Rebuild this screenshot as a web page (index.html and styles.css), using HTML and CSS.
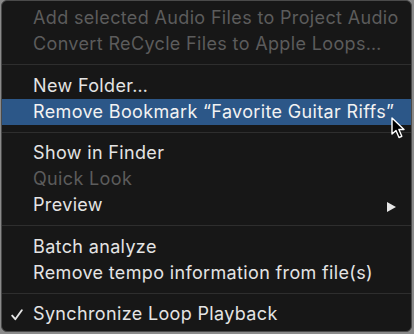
FILE: index.html
```html
<!DOCTYPE html>
<html>
<head>
  <title>Context Menu</title>
  <link rel="stylesheet" href="styles.css">
</head>
<body>
  <div class="menu">
    <div class="menu-item disabled">Add selected Audio Files to Project Audio</div>
    <div class="menu-item disabled">Convert ReCycle Files to Apple Loops…</div>
    <div class="separator wide"></div>
    <div class="menu-item">New Folder…</div>
    <div class="menu-item selected">Remove Bookmark “Favorite Guitar Riffs”
      <svg class="cursor" width="16" height="24" viewBox="0 0 16 24">
        <path d="M1 1 L1 17 L5 13.5 L8 20.5 L10.8 19.3 L7.9 12.5 L13 12.5 Z" fill="#000" stroke="#fff" stroke-width="1.4" stroke-linejoin="round"/>
      </svg>
    </div>
    <div class="separator"></div>
    <div class="menu-item">Show in Finder</div>
    <div class="menu-item disabled">Quick Look</div>
    <div class="menu-item has-submenu">Preview
      <svg class="submenu-arrow" width="9" height="10" viewBox="0 0 9 10">
        <path d="M0 0 L9 5 L0 10 Z" fill="#e6e6e6"/>
      </svg>
    </div>
    <div class="separator wide"></div>
    <div class="menu-item">Batch analyze</div>
    <div class="menu-item">Remove tempo information from file(s)</div>
    <div class="separator"></div>
    <div class="menu-item checked">
      <svg class="check" width="12" height="12" viewBox="0 0 12 12">
        <path d="M1.2 6.6 L4.3 10.2 L10.8 1.2" fill="none" stroke="#e4e4e4" stroke-width="1.9" stroke-linecap="round" stroke-linejoin="round"/>
      </svg>Synchronize Loop Playback</div>
  </div>
</body>
</html>
```

FILE: styles.css
```css
body {
  margin: 0;
  padding: 0;
  background-color: #8a8a8a;
  font-family: Inter, "Noto Sans", sans-serif;
}

.menu {
  box-sizing: border-box;
  width: 411px;
  height: 332px;
  margin: 0 0 0 1px;
  background-color: #171717;
  border: 1px solid #4a4a4a;
  border-radius: 6px;
  padding: 4px 0;
  overflow: hidden;
}

.menu-item {
  position: relative;
  height: 26px;
  line-height: 26px;
  padding-left: 31px;
  font-size: 18px;
  letter-spacing: 0.35px;
  color: #e4e4e4;
  white-space: nowrap;
}

.menu-item.disabled {
  color: #5c5c5c;
}

.menu-item.selected {
  background-color: #2c5788;
  color: #f2f2f2;
}

.separator {
  height: 1px;
  background-color: #2e2e2e;
  margin: 7px 0 7px 0;
}

.separator.wide {
  margin-bottom: 8px;
}

.submenu-arrow {
  position: absolute;
  right: 15px;
  top: 10px;
}

.check {
  position: absolute;
  left: 9px;
  top: 8px;
}

.cursor {
  position: absolute;
  left: 389px;
  top: 18px;
}
```
